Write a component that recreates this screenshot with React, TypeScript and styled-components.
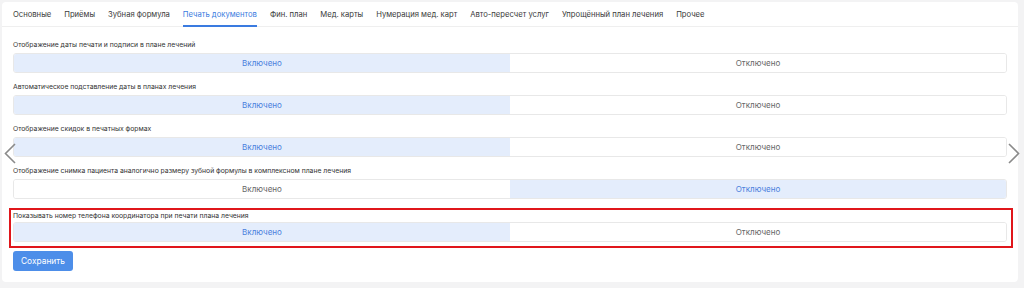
import React, { useState } from "react";
import styled, { createGlobalStyle } from "styled-components";

const GlobalStyle = createGlobalStyle`
  html, body {
    margin: 0;
    padding: 0;
    background: #f3f3f4;
    font-family: Inter, "Noto Sans", sans-serif;
  }
`;

const tabs = [
  "Основные",
  "Приёмы",
  "Зубная формула",
  "Печать документов",
  "Фин. план",
  "Мед. карты",
  "Нумерация мед. карт",
  "Авто-пересчет услуг",
  "Упрощённый план лечения",
  "Прочее",
];

const settings = [
  { label: "Отображение даты печати и подписи в плане лечений", on: true },
  { label: "Автоматическое подставление даты в планах лечения", on: true },
  { label: "Отображение скидок в печатных формах", on: true },
  {
    label: "Отображение снимка пациента аналогично размеру зубной формулы в комплексном плане лечения",
    on: false,
  },
  {
    label: "Показывать номер телефона координатора при печати плана лечения",
    on: true,
    marked: true,
  },
];

const App: React.FC = () => {
  const [values, setValues] = useState(settings.map((s) => s.on));
  const [active, setActive] = useState(3);

  return (
    <>
      <GlobalStyle />
      <Page>
        <Card>
          <TabBar>
            {tabs.map((t, i) => (
              <Tab key={t} active={i === active} onClick={() => setActive(i)}>
                {t}
              </Tab>
            ))}
          </TabBar>

          <Body>
            {settings.map((s, i) => (
              <Row key={s.label} marked={!!s.marked}>
                <Label>{s.label}</Label>
                <Segmented>
                  <Segment
                    selected={values[i]}
                    onClick={() => setValues(values.map((v, j) => (j === i ? true : v)))}
                  >
                    Включено
                  </Segment>
                  <Segment
                    selected={!values[i]}
                    onClick={() => setValues(values.map((v, j) => (j === i ? false : v)))}
                  >
                    Отключено
                  </Segment>
                </Segmented>
              </Row>
            ))}
            <SaveButton>Сохранить</SaveButton>
          </Body>

          <Arrow side="left">
            <svg width="12" height="21" viewBox="0 0 12 21" fill="none">
              <polyline points="11,1 1.5,10.5 11,20" stroke="#8a8a8a" strokeWidth="1.6" />
            </svg>
          </Arrow>
          <Arrow side="right">
            <svg width="12" height="21" viewBox="0 0 12 21" fill="none">
              <polyline points="1,1 10.5,10.5 1,20" stroke="#8a8a8a" strokeWidth="1.6" />
            </svg>
          </Arrow>
        </Card>
      </Page>
    </>
  );
};

export default App;

/* Styled Components */
const Page = styled.div`
  padding: 2px 6px 6px 2px;
`;

const Card = styled.div`
  position: relative;
  background: #fff;
  border-radius: 4px;
  height: 280px;
  box-sizing: border-box;
`;

const TabBar = styled.div`
  display: flex;
  align-items: center;
  gap: 13px;
  height: 24px;
  padding: 0 11px;
  border-bottom: 1px solid #efefef;
`;

const Tab = styled.div<{ active: boolean }>`
  position: relative;
  height: 100%;
  display: flex;
  align-items: center;
  padding-top: 1px;
  box-sizing: border-box;
  font-size: 7.65px;
  color: ${({ active }) => (active ? "#3a7be0" : "#3a3a3a")};
  cursor: pointer;
  white-space: nowrap;

  &::after {
    content: "";
    position: absolute;
    left: 0;
    right: 0;
    bottom: -1px;
    height: 2px;
    background: ${({ active }) => (active ? "#3a7be0" : "transparent")};
  }
`;

const Body = styled.div`
  display: flex;
  flex-direction: column;
  padding: 13px 11px 12px;
`;

const Row = styled.div<{ marked: boolean }>`
  display: flex;
  flex-direction: column;
  gap: 3px;
  margin-bottom: 9px;
  ${({ marked }) =>
    marked &&
    `
    margin: 0 -6px 3px -4px;
    padding: 1px 4px 4px 2px;
    border: 2px solid #e0161b;
    gap: 1px;
  `}
`;

const Label = styled.div`
  font-size: 6.8px;
  line-height: 10px;
  color: #333;
`;

const Segmented = styled.div`
  display: grid;
  grid-template-columns: 1fr 1fr;
  height: 20px;
  border: 1px solid #e8e8e8;
  border-radius: 3px;
  overflow: hidden;
  box-sizing: border-box;
`;

const Segment = styled.div<{ selected: boolean }>`
  display: flex;
  align-items: center;
  justify-content: center;
  font-size: 8px;
  cursor: pointer;
  background: ${({ selected }) => (selected ? "#e4edfc" : "#fff")};
  color: ${({ selected }) => (selected ? "#4a80dc" : "#666")};
`;

const SaveButton = styled.button`
  align-self: flex-start;
  width: 60px;
  height: 20px;
  border: none;
  border-radius: 3px;
  background: #4d8ee9;
  color: #fff;
  font-family: inherit;
  font-size: 8.4px;
  cursor: pointer;
`;

const Arrow = styled.div<{ side: "left" | "right" }>`
  position: absolute;
  top: 141px;
  ${({ side }) => (side === "left" ? "left: 2px;" : "right: -2px;")}
  display: flex;
`;
